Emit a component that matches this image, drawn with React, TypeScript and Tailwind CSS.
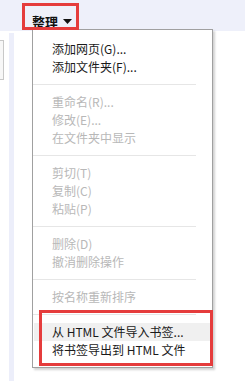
import React from 'react';

type Entry = { label: string; disabled?: boolean; hover?: boolean } | 'sep';

const entries: Entry[] = [
  { label: '添加网页(G)...' },
  { label: '添加文件夹(F)...' },
  'sep',
  { label: '重命名(R)...', disabled: true },
  { label: '修改(E)...', disabled: true },
  { label: '在文件夹中显示', disabled: true },
  'sep',
  { label: '剪切(T)', disabled: true },
  { label: '复制(C)', disabled: true },
  { label: '粘贴(P)', disabled: true },
  'sep',
  { label: '删除(D)', disabled: true },
  { label: '撤消删除操作', disabled: true },
  'sep',
  { label: '按名称重新排序', disabled: true },
  'sep',
  { label: '从 HTML 文件导入书签...', hover: true },
  { label: '将书签导出到 HTML 文件' },
];

export default function App() {
  return (
    <div className="relative h-[381px] w-[245px] overflow-hidden bg-white font-['Microsoft_YaHei','Noto_Sans_CJK_SC',sans-serif]">
      {/* toolbar */}
      <div className="flex h-[31px] items-end bg-[#eef0fa] pl-[32px] pb-[3px]">
        <div className="flex items-center gap-[5px] text-[13px] font-bold leading-none text-[#111]">
          <span>整理</span>
          <svg width="9" height="5" viewBox="0 0 9 5">
            <path d="M0 0h9L4.5 5z" fill="#111" />
          </svg>
        </div>
      </div>

      {/* page behind */}
      <div className="flex h-[350px]">
        <div className="mt-[9px] h-[40px] w-[4px] border border-l-0 border-[#c8c8c8] bg-[#f7f7f7]" />
        <div className="ml-[5px] mt-[2px] w-[5px] bg-[#eceefa]" />
      </div>

      {/* dropdown menu */}
      <div className="absolute left-[32px] top-[29px] w-[181px] border border-[#a0a0a0] bg-white pt-[10px] pb-[8px] shadow-[2px_2px_2px_rgba(0,0,0,0.18)]">
        {entries.map((e, i) =>
          e === 'sep' ? (
            <div key={i} className="flex h-[17px] items-center">
              <div className="h-px w-[163px] bg-[#e6e6e6]" />
            </div>
          ) : (
            <div
              key={i}
              className={`mx-[1px] flex h-[18px] items-center pl-[18px] text-[12px] leading-none ${
                e.disabled ? 'text-[#b8b8b8]' : 'text-[#1a1a1a]'
              } ${e.hover ? 'bg-[#f0f0f0]' : ''}`}
            >
              {e.label}
            </div>
          )
        )}
      </div>

      {/* annotation boxes */}
      <div className="absolute left-[22px] top-[3px] h-[27px] w-[57px] border-[3px] border-[#e53c3c]" />
      <div className="absolute left-[39px] top-[310px] h-[56px] w-[174px] border-[3px] border-[#e53c3c]" />
    </div>
  );
}
